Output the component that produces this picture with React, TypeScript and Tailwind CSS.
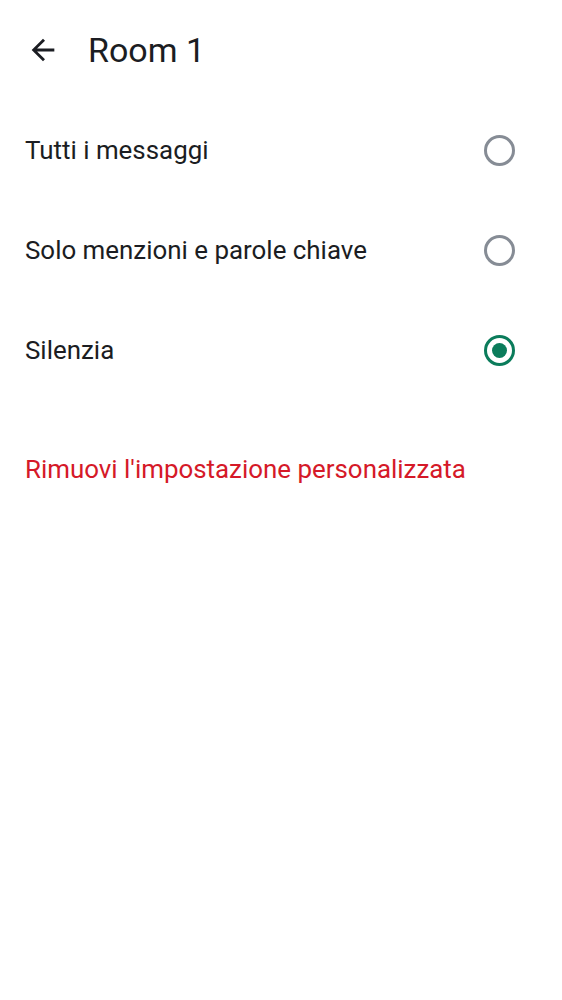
import { useState } from "react"

const OPTIONS = [
  { id: "all", label: "Tutti i messaggi" },
  { id: "mentions", label: "Solo menzioni e parole chiave" },
  { id: "mute", label: "Silenzia" },
]

function BackArrow() {
  return (
    <svg viewBox="0 0 24 24" className="h-[34px] w-[34px] fill-[#1b1d22]">
      <path d="M20 11H7.83l5.59-5.59L12 4l-8 8 8 8 1.41-1.41L7.83 13H20v-2z" />
    </svg>
  )
}

function Radio({ checked }: { checked: boolean }) {
  return (
    <span
      className={
        checked
          ? "flex h-[31px] w-[31px] items-center justify-center rounded-full border-[3px] border-[#0b7c5b]"
          : "flex h-[31px] w-[31px] items-center justify-center rounded-full border-[3px] border-[#868c95]"
      }
    >
      {checked && <span className="h-[15px] w-[15px] rounded-full bg-[#0b7c5b]" />}
    </span>
  )
}

export default function App() {
  const [selected, setSelected] = useState("mute")

  return (
    <div className="min-h-[1000px] bg-white font-['Roboto',sans-serif] text-[#1b1d22]">
      <header className="flex h-[100px] items-center pl-[26px]">
        <BackArrow />
        <h1 className="ml-[28px] text-[34px] leading-none">Room 1</h1>
      </header>
      <ul className="flex flex-col">
        {OPTIONS.map((option) => (
          <li key={option.id}>
            <button
              onClick={() => setSelected(option.id)}
              className="flex h-[100px] w-full items-center justify-between pl-[25px] pr-[47px] text-left"
            >
              <span className="text-[25.9px]">{option.label}</span>
              <Radio checked={selected === option.id} />
            </button>
          </li>
        ))}
      </ul>
      <button className="mt-[19px] flex h-[100px] items-center pl-[25px] text-[25.9px] text-[#d51928]">
        Rimuovi l'impostazione personalizzata
      </button>
    </div>
  )
}
